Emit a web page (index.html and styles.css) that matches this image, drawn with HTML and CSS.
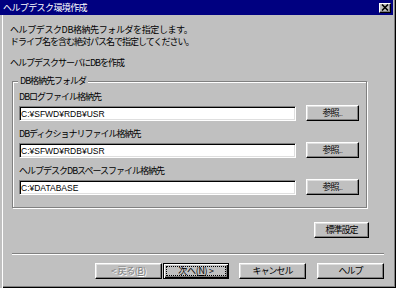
FILE: index.html
```html
<!DOCTYPE html>
<html lang="ja">

<head>
  <meta charset="UTF-8">
  <title>ヘルプデスク環境作成</title>
  <link rel="stylesheet" href="styles.css">
</head>

<body>
  <div class="window">
    <div class="titlebar">
      <span class="title">ヘルプデスク環境作成</span>
      <span class="close">
        <svg width="8" height="7" viewBox="0 0 8 7">
          <path d="M1 0.5 L7 6.5 M7 0.5 L1 6.5" stroke="#000" stroke-width="1.6" fill="none" />
        </svg>
      </span>
    </div>

    <div class="content">
      <p class="intro"><span class="wide">ヘルプデスクDB格納先フォルダを指定します。</span><br>ドライブ名を含む絶対パス名で指定してください。</p>
      <p class="server">ヘルプデスクサーバにDBを作成</p>

      <fieldset class="group">
        <legend>DB格納先フォルダ</legend>
        <div class="fields">
          <div class="field">
            <label for="log">DBログファイル格納先</label>
            <div class="row">
              <input class="path" id="log" value="C:¥SFWD¥RDB¥USR">
              <button class="btn browse">参照<small>...</small></button>
            </div>
          </div>
          <div class="field">
            <label for="dict">DBディクショナリファイル格納先</label>
            <div class="row">
              <input class="path" id="dict" value="C:¥SFWD¥RDB¥USR">
              <button class="btn browse">参照<small>...</small></button>
            </div>
          </div>
          <div class="field">
            <label for="space">ヘルプデスクDBスペースファイル格納先</label>
            <div class="row">
              <input class="path" id="space" value="C:¥DATABASE">
              <button class="btn browse">参照<small>...</small></button>
            </div>
          </div>
        </div>
      </fieldset>

      <div class="defaults">
        <button class="btn std">標準設定</button>
      </div>

      <div class="separator"></div>

      <div class="nav">
        <button class="btn back" disabled>&lt; 戻る(<u>B</u>)</button>
        <button class="btn next"><span class="focus">次へ(<u>N</u>) &gt;</span></button>
        <button class="btn cancel">キャンセル</button>
        <button class="btn help">ヘルプ</button>
      </div>
    </div>
  </div>
</body>

</html>
```

FILE: styles.css
```css
/* Globals */
* {
  box-sizing: border-box;
  margin: 0;
}

body {
  margin: 0;
  background: #c0c0c0;
  color: #000;
  font-family: "Noto Sans CJK JP", "Liberation Sans", sans-serif;
  font-size: 9px;
  line-height: 12px;
  letter-spacing: -1px;
}

/* Window frame */
.window {
  inline-size: 396px;
  block-size: 288px;
  display: flex;
  flex-direction: column;
  box-shadow: inset 2px 0 #c0c0c0, inset 3px 0 #fff, inset -1px -1px #000, inset -2px -2px #808080;
}

.titlebar {
  block-size: 15px;
  margin-inline-end: 3px;
  padding-inline: 3px 2px;
  background: #000080;
  color: #fff;
  display: flex;
  align-items: center;
  justify-content: space-between;
}

.title {
  letter-spacing: -0.6px;
}

.close {
  inline-size: 12px;
  block-size: 10px;
  background: #c0c0c0;
  border: 1px solid;
  border-color: #fff #000 #000 #fff;
  box-shadow: inset -1px -1px #808080;
  display: flex;
  align-items: center;
  justify-content: center;
}

/* Dialog content */
.content {
  flex: 1;
  display: flex;
  flex-direction: column;
  padding: 9px 12px 0 10px;
}

.intro .wide {
  letter-spacing: -0.4px;
}

.server {
  margin-block-start: 9px;
}

.group {
  inline-size: 355px;
  min-inline-size: 0;
  margin: 6px 0 0 2px;
  padding: 4px 7px 12px 6px;
  border: 1px solid #808080;
  box-shadow: 1px 1px 0 #fff, inset 1px 1px 0 #fff;
}

.group legend {
  margin-inline-start: -1px;
  padding: 0 2px;
  background: #c0c0c0;
  line-height: 12px;
}

.fields {
  display: flex;
  flex-direction: column;
  gap: 7px;
}

.field {
  display: flex;
  flex-direction: column;
  gap: 2px;
}

.row {
  display: flex;
  align-items: flex-end;
  gap: 10px;
}

.path {
  inline-size: 277px;
  block-size: 15px;
  padding: 0 1px;
  border: 1px solid;
  border-color: #808080 #fff #fff #808080;
  box-shadow: inset 1px 1px #000, inset -1px -1px #dfdfdf;
  background: #fff;
  font-family: "Liberation Sans", sans-serif;
  font-size: 8.5px;
  letter-spacing: 0;
  color: #000;
  outline: none;
}

/* Buttons */
.btn {
  block-size: 16px;
  padding: 0;
  font: inherit;
  letter-spacing: inherit;
  color: #000;
  background: #c0c0c0;
  border: 1px solid;
  border-color: #fff #000 #000 #fff;
  box-shadow: inset -1px -1px #808080, inset 1px 1px #dfdfdf;
}

.browse {
  inline-size: 53px;
}

.browse small {
  font-size: 5px;
  letter-spacing: 0;
}

.defaults {
  display: flex;
  justify-content: flex-end;
  margin-block-start: 14px;
  padding-inline-end: 15px;
}

.std {
  inline-size: 55px;
}

.separator {
  block-size: 2px;
  margin: 15px 0 0 2px;
  border-top: 1px solid #808080;
  border-bottom: 1px solid #fff;
}

.nav {
  display: flex;
  justify-content: flex-end;
  margin-block-start: 8px;
}

.nav .btn {
  inline-size: 67px;
}

.back {
  color: #808080;
  text-shadow: 1px 1px 0 #fff;
  letter-spacing: -0.3px;
}

.nav .next {
  inline-size: 66px;
  margin-inline-start: 1px;
  padding: 2px;
  display: flex;
  border-color: #000;
  box-shadow: inset 1px 1px #fff, inset -1px -1px #000, inset -2px -2px #808080;
}

.focus {
  flex: 1;
  border: 1px dotted #000;
  display: flex;
  align-items: center;
  justify-content: center;
  letter-spacing: -0.3px;
}

.cancel {
  margin-inline-start: 10px;
}

.help {
  margin-inline-start: 11px;
}
```
